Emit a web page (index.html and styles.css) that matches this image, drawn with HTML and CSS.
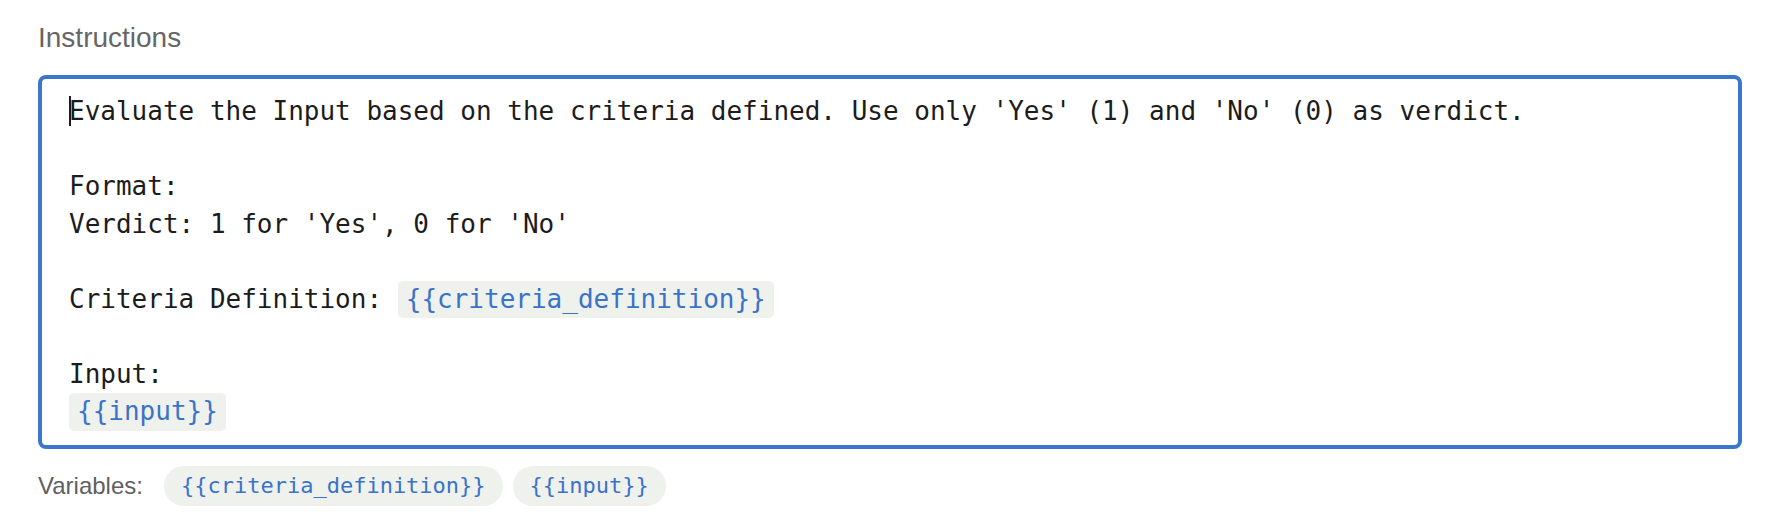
FILE: index.html
```html
<!DOCTYPE html>
<html>
<head>
<meta charset="utf-8">
<link rel="stylesheet" href="styles.css">
</head>
<body>
<div class="page">
  <div class="label">Instructions</div>
  <div class="editor"><span class="caret"></span>Evaluate the Input based on the criteria defined. Use only 'Yes' (1) and 'No' (0) as verdict.

Format:
Verdict: 1 for 'Yes', 0 for 'No'

Criteria Definition: <span class="var">{{criteria_definition}}</span>

Input:
<span class="var">{{input}}</span></div>
  <div class="vars">
    <span class="vars-label">Variables:</span>
    <span class="pill">{{criteria_definition}}</span>
    <span class="pill">{{input}}</span>
  </div>
</div>
</body>
</html>
```
FILE: styles.css
```css
html, body {
  margin: 0;
  padding: 0;
  background: #ffffff;
}

.page {
  padding: 22px 36px 0 38px;
  font-family: "Liberation Sans", Arial, sans-serif;
}

.label {
  font-size: 28px;
  line-height: 32px;
  color: #666666;
  margin-bottom: 21px;
}

.editor {
  border: 4px solid #3a76cc;
  border-radius: 8px;
  padding: 14px 26px 14px 27px;
  font-family: "DejaVu Sans Mono", monospace;
  font-size: 26px;
  line-height: 37.5px;
  color: #1c1c1c;
  white-space: pre-wrap;
}

.caret {
  display: inline-block;
  width: 0;
  height: 30px;
  border-left: 2px solid #1c1c1c;
  margin-right: -2px;
  vertical-align: -6px;
}

.var {
  display: inline-block;
  vertical-align: top;
  padding: 0 8px;
  height: 37.5px;
  background: #eff1ed;
  color: #3a73c9;
  border-radius: 5px;
}

.vars {
  display: flex;
  align-items: center;
  gap: 10px;
  margin-top: 17px;
}

.vars-label {
  font-size: 24px;
  color: #5f5f5f;
  margin-right: 11px;
}

.pill {
  font-family: "DejaVu Sans Mono", monospace;
  font-size: 22px;
  height: 40px;
  line-height: 40px;
  padding: 0 17px;
  border-radius: 20px;
  background: #eff1ed;
  color: #3a73c9;
}
```
